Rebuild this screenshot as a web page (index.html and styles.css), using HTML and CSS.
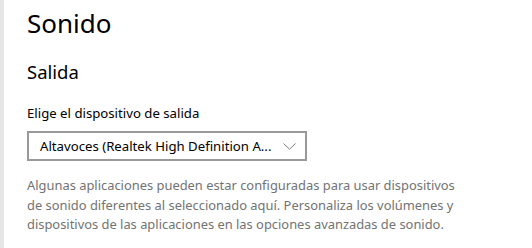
FILE: index.html
```html
<!DOCTYPE html>
<html lang="es">
<head>
<meta charset="utf-8">
<link rel="stylesheet" href="styles.css">
</head>
<body>
<div class="window">
  <div class="nav-edge"></div>
  <main class="content">
    <h1 class="page-title">Sonido</h1>
    <h2 class="section-title">Salida</h2>
    <div class="field">
      <label class="field-label">Elige el dispositivo de salida</label>
      <div class="combo">
        <span class="combo-text">Altavoces (Realtek High Definition A...</span>
        <svg class="chevron" width="13" height="7" viewBox="0 0 13 7"><path d="M0.5 0.5 L6.5 6.2 L12.5 0.5" fill="none" stroke="#7a7a7a" stroke-width="1"/></svg>
      </div>
    </div>
    <p class="note">Algunas aplicaciones pueden estar configuradas para usar dispositivos de sonido diferentes al seleccionado aquí. Personaliza los volúmenes y dispositivos de las aplicaciones en las opciones avanzadas de sonido.</p>
  </main>
</div>
</body>
</html>
```
FILE: styles.css
```css
html, body {
  margin: 0;
  padding: 0;
  background: #ffffff;
}
body {
  font-family: "Segoe UI", "Noto Sans", "Open Sans", sans-serif;
  color: #000000;
}
.window {
  display: flex;
  width: 532px;
  height: 248px;
  overflow: hidden;
}
.nav-edge {
  width: 4px;
  flex: none;
  background: #e6e6e6;
}
.content {
  flex: 1;
  padding: 5px 0 0 23px;
}
.page-title {
  margin: 0;
  font-size: 26px;
  font-weight: 400;
  line-height: 36px;
}
.section-title {
  margin: 18px 0 0 0;
  font-size: 18.5px;
  font-weight: 400;
  line-height: 26px;
}
.field {
  margin-top: 18px;
  display: flex;
  flex-direction: column;
}
.field-label {
  font-size: 13.2px;
  line-height: 20px;
}
.combo {
  margin-top: 8px;
  box-sizing: border-box;
  width: 280px;
  height: 30px;
  border: 2px solid #999999;
  display: flex;
  align-items: center;
  padding: 0 9px 0 11px;
  gap: 6px;
}
.combo-text {
  flex: 1;
  font-size: 13.2px;
  white-space: nowrap;
  overflow: hidden;
}
.chevron {
  flex: none;
}
.note {
  margin: 15px 0 0 0;
  width: 440px;
  font-size: 12.9px;
  line-height: 19.5px;
  color: #737373;
}
```
